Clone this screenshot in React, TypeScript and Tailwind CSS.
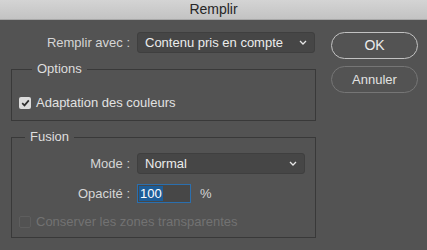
import React from "react";

const font = { fontFamily: '"Liberation Sans", Arial, sans-serif' };

function Chevron() {
  return (
    <svg width="8" height="5" viewBox="0 0 8 5" className="shrink-0">
      <path d="M1 1 L4 4 L7 1" fill="none" stroke="#e6e6e6" strokeWidth="1.3" />
    </svg>
  );
}

function Select({ value, width }: { value: string; width: string }) {
  return (
    <div
      className={`${width} h-[21px] flex items-center justify-between rounded-[3px] border border-[#3f3f3f] bg-[#464646] pl-[7px] pr-[7px] text-[13px] text-[#ececec]`}
    >
      <span>{value}</span>
      <Chevron />
    </div>
  );
}

function Check({ checked, disabled, label }: { checked?: boolean; disabled?: boolean; label: string }) {
  return (
    <div className="flex items-center gap-[5px] h-[15px]">
      {checked ? (
        <div className="w-[12px] h-[12px] rounded-[2px] bg-[#dcdcdc] flex items-center justify-center">
          <svg width="9" height="8" viewBox="0 0 9 8">
            <path d="M1.2 4.2 L3.5 6.4 L7.8 1.4" fill="none" stroke="#2e2e2e" strokeWidth="1.7" />
          </svg>
        </div>
      ) : (
        <div className="w-[12px] h-[12px] rounded-[2px] border border-[#5e5e5e] bg-[#525252]" />
      )}
      <span className={`text-[13px] leading-[15px] ${disabled ? "text-[#727272]" : "text-[#e2e2e2]"}`}>{label}</span>
    </div>
  );
}

export default function App() {
  return (
    <div className="w-[427px] h-[250px] bg-[#535353] flex flex-col overflow-hidden" style={font}>
      <div className="h-[20px] shrink-0 bg-gradient-to-b from-[#d4d4d4] to-[#c3c3c3] border-b border-[#a8a8a8] flex items-center justify-center text-[14px] text-[#262626]">
        Remplir
      </div>

      <div className="flex shrink-0 pl-[11px] pt-[12px]">
        <div className="w-[305px] flex flex-col">
          <div className="flex items-center h-[21px]">
            <div className="w-[119px] text-right text-[13px] text-[#d6d6d6]">Remplir avec :</div>
            <div className="ml-[7px]">
              <Select value="Contenu pris en compte" width="w-[178px]" />
            </div>
          </div>

          <fieldset className="mt-[8px] border border-[#393939] pl-[7px] pb-[10px]">
            <legend className="ml-[13px] px-[5px] text-[13px] leading-[16px] text-[#dedede]">Options</legend>
            <div className="mt-[18px]">
              <Check checked label="Adaptation des couleurs" />
            </div>
          </fieldset>

          <fieldset className="mt-[8px] border border-[#393939] pb-[8px]">
            <legend className="ml-[13px] px-[5px] text-[13px] leading-[16px] text-[#dedede]">Fusion</legend>
            <div className="flex items-center h-[21px] mt-[8px]">
              <div className="w-[118px] text-right text-[13px] text-[#d6d6d6]">Mode :</div>
              <div className="ml-[7px]">
                <Select value="Normal" width="w-[168px]" />
              </div>
            </div>
            <div className="flex items-center h-[19px] mt-[10px]">
              <div className="w-[118px] text-right text-[13px] text-[#d6d6d6]">Opacité :</div>
              <div className="ml-[7px] w-[54px] h-[19px] border border-[#2b6fae] bg-[#474747] flex items-center pl-[1px]">
                <span className="bg-[#1d5d98] text-[13px] text-white leading-[15px] px-[1px]">100</span>
              </div>
              <span className="ml-[9px] text-[13px] text-[#d6d6d6]">%</span>
            </div>
            <div className="mt-[11px] pl-[7px]">
              <Check disabled label="Conserver les zones transparentes" />
            </div>
          </fieldset>
        </div>

        <div className="ml-[15px] flex flex-col gap-[7px]">
          <button className="w-[87px] h-[27px] rounded-full border border-[#c2c2c2] text-[14px] text-[#ececec]">OK</button>
          <button className="w-[87px] h-[27px] rounded-full border border-[#767676] text-[13px] text-[#e2e2e2]">Annuler</button>
        </div>
      </div>
    </div>
  );
}
